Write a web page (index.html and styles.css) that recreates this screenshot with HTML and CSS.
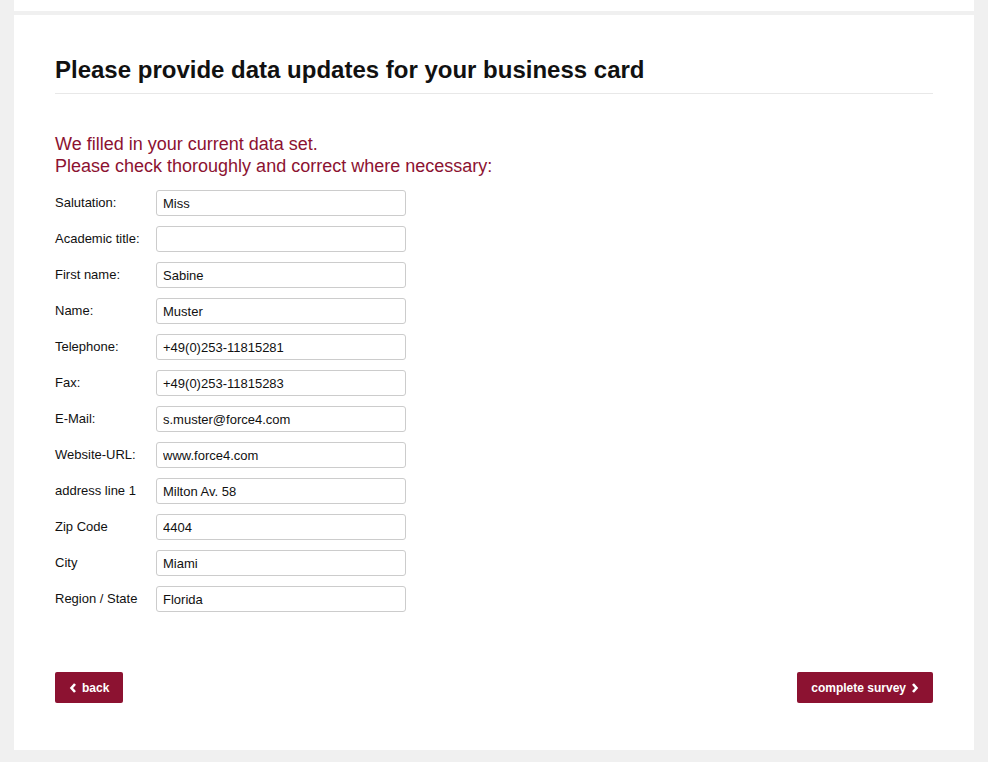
FILE: index.html
```html
<!DOCTYPE html>
<html lang="en">
<head>
    <meta charset="UTF-8">
    <meta name="viewport" content="width=device-width, initial-scale=1.0">
    <title>Business card update</title>
    <link rel="stylesheet" href="styles.css">
</head>
<body>
    <div class="topCard"></div>

    <div class="mainCard">
        <h1>Please provide data updates for your business card</h1>

        <p class="notice">
            We filled in your current data set.<br>
            Please check thoroughly and correct where necessary:
        </p>

        <form class="dataForm">
            <div class="row"><label>Salutation:</label><input type="text" value="Miss"></div>
            <div class="row"><label>Academic title:</label><input type="text" value=""></div>
            <div class="row"><label>First name:</label><input type="text" value="Sabine"></div>
            <div class="row"><label>Name:</label><input type="text" value="Muster"></div>
            <div class="row"><label>Telephone:</label><input type="text" value="+49(0)253-11815281"></div>
            <div class="row"><label>Fax:</label><input type="text" value="+49(0)253-11815283"></div>
            <div class="row"><label>E-Mail:</label><input type="text" value="s.muster@force4.com"></div>
            <div class="row"><label>Website-URL:</label><input type="text" value="www.force4.com"></div>
            <div class="row"><label>address line 1</label><input type="text" value="Milton Av. 58"></div>
            <div class="row"><label>Zip Code</label><input type="text" value="4404"></div>
            <div class="row"><label>City</label><input type="text" value="Miami"></div>
            <div class="row"><label>Region / State</label><input type="text" value="Florida"></div>
        </form>

        <div class="btnWrap">
            <a class="btn" href="#">
                <svg width="8" height="10" viewBox="0 0 8 10"><path d="M6 1L2.5 5L6 9" fill="none" stroke="#fff" stroke-width="2.6"/></svg>
                back
            </a>
            <a class="btn" href="#">
                complete survey
                <svg width="8" height="10" viewBox="0 0 8 10"><path d="M2 1L5.5 5L2 9" fill="none" stroke="#fff" stroke-width="2.6"/></svg>
            </a>
        </div>
    </div>
</body>
</html>
```

FILE: styles.css
```css
body {
    margin: 0;
    background-color: #f0f0f0;
    font-family: "Liberation Sans", Arial, sans-serif;
    color: #111;
}
.topCard {
    margin: 0 14px;
    height: 11px;
    background-color: #fff;
}
.mainCard {
    margin: 4px 14px 0;
    padding: 40px 41px 47px;
    background-color: #fff;
}
h1 {
    margin: 0;
    padding-bottom: 8px;
    font-size: 24px;
    font-weight: 700;
    line-height: 30px;
    border-bottom: 1px solid #e8e8e8;
}
.notice {
    margin: 39px 0 13px;
    color: #8c1231;
    font-size: 18px;
    line-height: 22px;
}
.dataForm .row {
    display: flex;
    align-items: center;
    height: 26px;
    margin-bottom: 10px;
}
.dataForm label {
    width: 101px;
    font-size: 13px;
    margin-top: -1px;
}
.dataForm input {
    box-sizing: border-box;
    width: 250px;
    height: 26px;
    padding: 0 6px;
    border: 1px solid #ccc;
    border-radius: 3px;
    font-family: inherit;
    font-size: 13px;
    color: #111;
}
.btnWrap {
    display: flex;
    justify-content: space-between;
    margin-top: 60px;
}
.btn {
    display: flex;
    align-items: center;
    gap: 5px;
    height: 31px;
    padding: 0 14px;
    box-sizing: border-box;
    background-color: #8c1231;
    border-radius: 2px;
    color: #fff;
    font-size: 12px;
    font-weight: 700;
    text-decoration: none;
}
```
